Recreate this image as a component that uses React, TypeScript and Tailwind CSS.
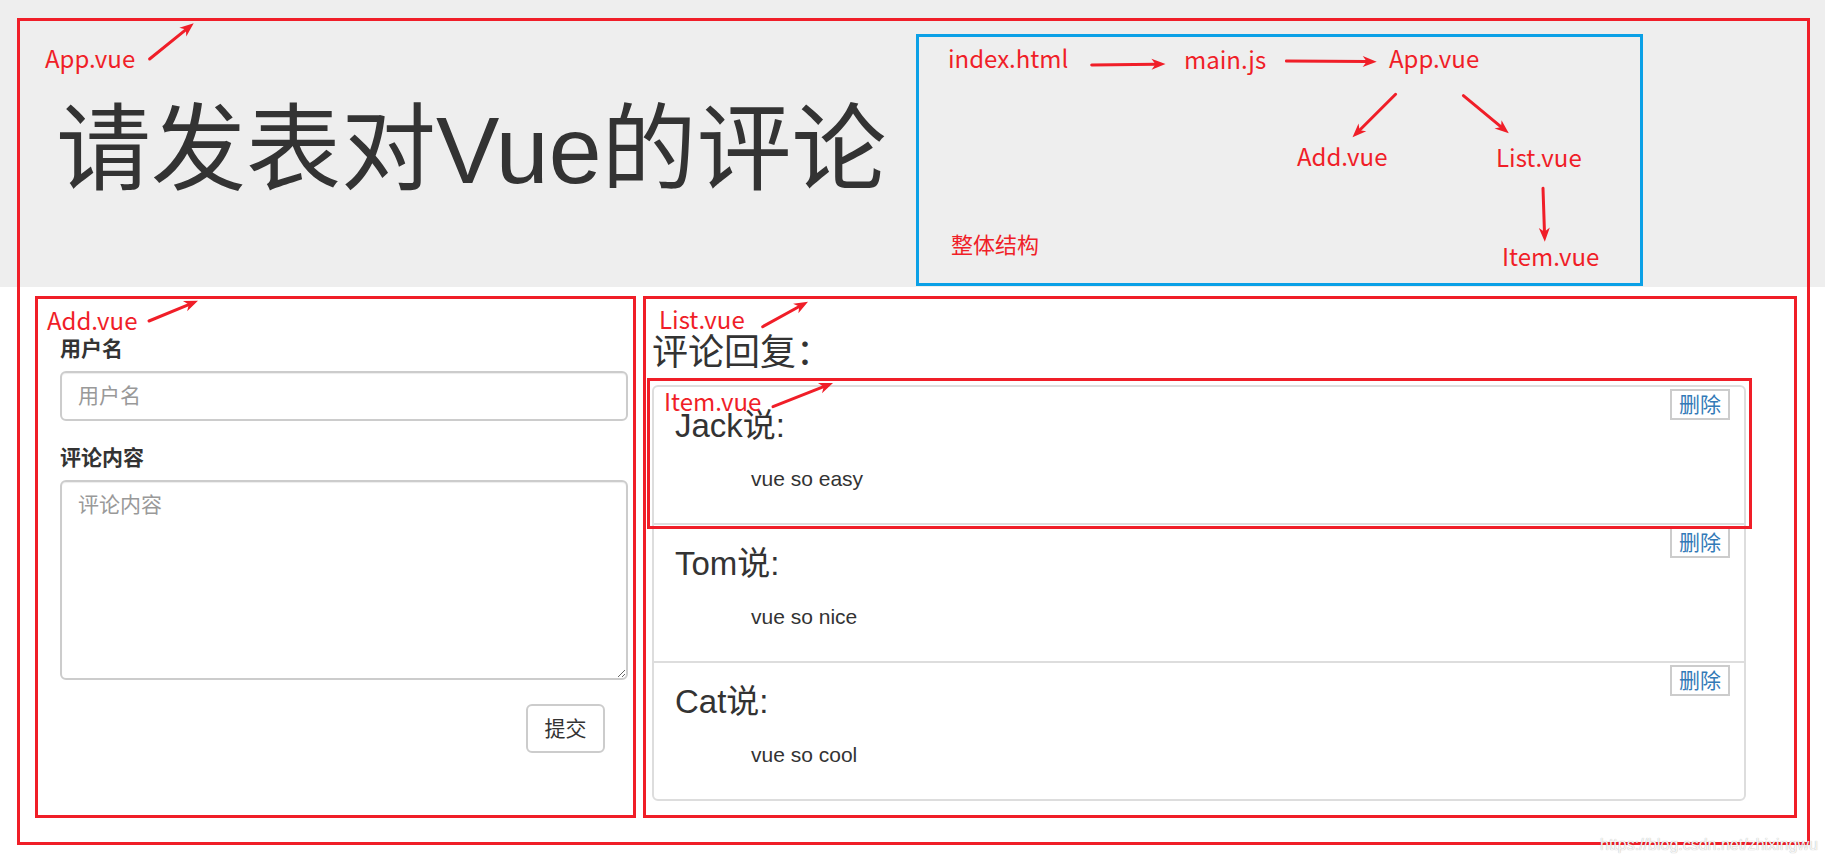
import React from "react";

type Pt = [number, number];

const RED = "#f01e28";

function Arrow({ from, to }: { from: Pt; to: Pt }) {
  const [x1, y1] = from;
  const [x2, y2] = to;
  const dx = x2 - x1;
  const dy = y2 - y1;
  const len = Math.hypot(dx, dy);
  const ux = dx / len;
  const uy = dy / len;
  const hl = 14;
  const hw = 5.5;
  const bx = x2 - ux * hl;
  const by = y2 - uy * hl;
  const px = -uy;
  const py = ux;
  const nx = x2 - ux * (hl - 4);
  const ny = y2 - uy * (hl - 4);
  return (
    <g>
      <line x1={x1} y1={y1} x2={nx} y2={ny} stroke={RED} strokeWidth={3} strokeLinecap="round" />
      <polygon
        points={`${x2},${y2} ${bx + px * hw},${by + py * hw} ${nx},${ny} ${bx - px * hw},${by - py * hw}`}
        fill={RED}
      />
    </g>
  );
}

const comments = [
  { name: "Jack", content: "vue so easy" },
  { name: "Tom", content: "vue so nice" },
  { name: "Cat", content: "vue so cool" },
];

function Note({ className, children }: { className: string; children: React.ReactNode }) {
  return (
    <span
      className={`absolute whitespace-nowrap font-['Noto_Sans_CJK_SC',sans-serif] leading-none text-[#f01e28] ${className}`}
    >
      {children}
    </span>
  );
}

export default function App() {
  return (
    <div className="relative h-[862px] w-[1825px] overflow-hidden bg-[linear-gradient(to_bottom,#eeeeee_0px,#eeeeee_287px,#ffffff_287px)] pt-[18px] font-['Liberation_Sans','Noto_Sans_CJK_SC',sans-serif] text-[#333]">
      {/* App.vue box */}
      <div className="ml-[17px] w-[1793px] border-[3px] border-[#f01e28]">
        <header className="flex h-[275px]">
          <div className="w-[896px] pl-[36px] pt-[82px]">
            <h1 className="whitespace-nowrap text-[95px] font-normal leading-none text-[#333]">请发表对Vue的评论</h1>
          </div>
          <div className="relative mt-[13px] h-[252px] w-[727px] border-[3px] border-[#0aa0e6]">
            <Note className="left-[29px] top-[9px] text-[24px]">index.html</Note>
            <Note className="left-[265px] top-[10px] text-[24px]">main.js</Note>
            <Note className="left-[470px] top-[9px] text-[24px]">App.vue</Note>
            <Note className="left-[378px] top-[107px] text-[24px]">Add.vue</Note>
            <Note className="left-[577px] top-[108px] text-[24px]">List.vue</Note>
            <Note className="left-[583px] top-[207px] text-[24px]">Item.vue</Note>
            <Note className="left-[32px] top-[195px] text-[22px]">整体结构</Note>
            <svg className="absolute inset-0" width={721} height={246}>
              <Arrow from={[172.7, 28]} to={[246.5, 27]} />
              <Arrow from={[367.4, 24]} to={[457.7, 24.7]} />
              <Arrow from={[476.6, 57.3]} to={[433.5, 100.3]} />
              <Arrow from={[544.4, 58.7]} to={[589.8, 96.3]} />
              <Arrow from={[624, 151.3]} to={[625.8, 204.7]} />
            </svg>
          </div>
        </header>

        <div className="flex gap-[7px] pb-[24px] pl-[15px] pr-[10px]">
          {/* Add.vue */}
          <section className="h-[522px] w-[601px] border-[3px] border-[#f01e28] pl-[22px] pr-[5px] pt-[35px]">
            <form className="flex flex-col" onSubmit={(e) => e.preventDefault()}>
              <label className="mb-[7px] block text-[21px] font-bold leading-[30px]">用户名</label>
              <input
                type="text"
                placeholder="用户名"
                className="block h-[50px] w-full rounded-[6px] border-2 border-[#ccc] bg-white px-[16px] text-[21px] text-[#555] shadow-[inset_0_1px_1px_rgba(0,0,0,0.075)] outline-none placeholder:text-[#999]"
              />
              <label className="mb-[7px] mt-[22px] block text-[21px] font-bold leading-[30px]">评论内容</label>
              <textarea
                placeholder="评论内容"
                className="block h-[200px] w-full rounded-[6px] border-2 border-[#ccc] bg-white px-[16px] py-[8px] text-[21px] leading-[30px] text-[#555] shadow-[inset_0_1px_1px_rgba(0,0,0,0.075)] outline-none placeholder:text-[#999]"
              />
              <div className="mt-[24px] flex justify-end pr-[23px]">
                <button
                  type="submit"
                  className="h-[49px] w-[79px] rounded-[6px] border-2 border-[#ccc] bg-white text-[21px] leading-none text-[#333]"
                >
                  提交
                </button>
              </div>
            </form>
          </section>

          {/* List.vue */}
          <section className="h-[522px] flex-1 border-[3px] border-[#f01e28] pl-[6px] pt-[34px]">
            <h3 className="mb-[12px] text-[36px] font-normal leading-[40px] text-[#333]">评论回复：</h3>
            <ul className="flex w-[1094px] flex-col rounded-[6px] border-2 border-[#ddd]">
              {comments.map((c, i) => (
                <li
                  key={c.name}
                  className={`relative pb-[29px] pl-[21px] pt-[15px] ${i > 0 ? "border-t-2 border-[#ddd]" : ""}`}
                >
                  <button className="absolute right-[14px] top-[2px] h-[31px] border-2 border-[#ccc] bg-white px-[7px] text-[21px] leading-[25px] text-[#337ab7]">
                    删除
                  </button>
                  <p className="text-[33px] leading-[47px]">
                    <span>{c.name}</span>
                    <span>说:</span>
                  </p>
                  <p className="mt-[15px] pl-[76px] text-[21px] leading-[30px]">{c.content}</p>
                </li>
              ))}
            </ul>
          </section>
        </div>
      </div>

      {/* annotation overlay */}
      <div className="pointer-events-none absolute inset-0">
        <Note className="left-[45px] top-[46px] text-[24px]">App.vue</Note>
        <Note className="left-[47px] top-[308px] text-[24px]">Add.vue</Note>
        <Note className="left-[659px] top-[307px] text-[24px]">List.vue</Note>
        <Note className="left-[664px] top-[389px] text-[24px]">Item.vue</Note>
        <div className="absolute left-[647px] top-[378px] h-[151px] w-[1105px] border-[3px] border-[#f01e28]" />
        <svg className="absolute inset-0" width={1825} height={862}>
          <Arrow from={[149.6, 59]} to={[193.7, 23.3]} />
          <Arrow from={[149, 321]} to={[198, 300.7]} />
          <Arrow from={[762.7, 326.7]} to={[808, 301.7]} />
          <Arrow from={[773, 406.7]} to={[833, 383]} />
        </svg>
        <span className="absolute left-[1600px] top-[837px] whitespace-nowrap text-[16px] leading-none text-[#f7f7f7] [text-shadow:0_0_1px_rgba(0,0,0,0.35)]">
          https://blog.csdn.net/zhixingwu
        </span>
      </div>
    </div>
  );
}
